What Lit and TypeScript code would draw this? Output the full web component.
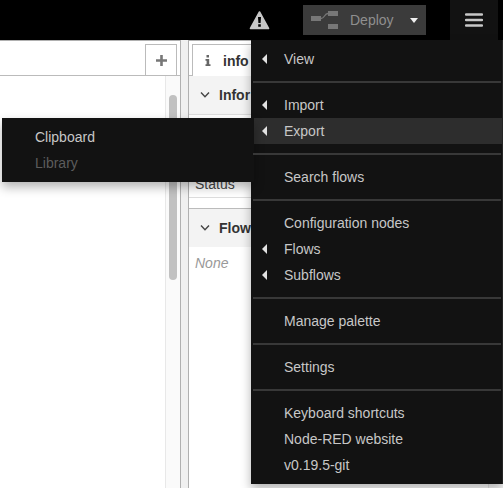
import { LitElement, html, svg, css, nothing } from "lit";
import { customElement, property } from "lit/decorators.js";

interface Entry {
  label: string;
  disabled?: boolean;
  active?: boolean;
  more?: boolean;
  items?: Entry[];
}

const MENU: Entry[][] = [
  [{ label: "View", more: true }],
  [
    { label: "Import", more: true },
    {
      label: "Export",
      more: true,
      active: true,
      items: [{ label: "Clipboard" }, { label: "Library", disabled: true }],
    },
  ],
  [{ label: "Search flows" }],
  [
    { label: "Configuration nodes" },
    { label: "Flows", more: true },
    { label: "Subflows", more: true },
  ],
  [{ label: "Manage palette" }],
  [{ label: "Settings" }],
  [
    { label: "Keyboard shortcuts" },
    { label: "Node-RED website" },
    { label: "v0.19.5-git" },
  ],
];

const chevron = svg`<svg class="chevron" width="10" height="8" viewBox="0 0 10 8" aria-hidden="true">
  <path d="M1 1.5 5 5.7 9 1.5" fill="none" stroke="#444" stroke-width="1.4" />
</svg>`;

@customElement("nr-menu")
export class NrMenu extends LitElement {
  @property({ attribute: false }) groups: Entry[][] = [];

  static styles = css`
    :host {
      display: block;
    }
    ul {
      list-style: none;
      margin: 0;
      padding: 6px 0;
      width: 252px;
      box-sizing: border-box;
      border-right: 1px solid #242424;
      background: #121212;
      box-shadow: 0 5px 10px rgba(0, 0, 0, 0.3);
    }
    li {
      position: relative;
    }
    .item {
      display: flex;
      align-items: center;
      height: 26px;
      margin-left: 3px;
      padding-left: 30px;
      color: #c7c7c7;
      font-size: 14px;
      line-height: 26px;
      text-decoration: none;
      white-space: nowrap;
    }
    .item.more {
      padding-left: 8px;
      gap: 17px;
    }
    .item.active {
      background: #2d2d2d;
    }
    .item.disabled {
      color: #5c5c5c;
    }
    .divider {
      height: 2px;
      margin: 9px 1px 9px 2px;
      background: #383838;
    }
    .submenu {
      position: absolute;
      top: 0;
      right: calc(100% - 3px);
      border-right: 0;
    }
  `;

  private entry(e: Entry): unknown {
    return html`<li role="none">
      <a
        class="item ${e.more ? "more" : ""} ${e.active ? "active" : ""} ${e.disabled ? "disabled" : ""}"
        role="menuitem"
        href="#"
        aria-disabled=${e.disabled ? "true" : "false"}
        >${e.more
          ? html`<svg width="5" height="10" viewBox="0 0 5 10" aria-hidden="true">
              <path d="M5 0V10L0 5Z" fill="#e2e2e2" />
            </svg>`
          : nothing}<span>${e.label}</span></a
      >
      ${e.items
        ? html`<ul class="submenu" role="menu">
            ${e.items.map((i) => this.entry(i))}
          </ul>`
        : nothing}
    </li>`;
  }

  render() {
    return html`<ul role="menu">
      ${this.groups.map(
        (g, i) => html`${i ? html`<li class="divider" role="separator"></li>` : nothing}
        ${g.map((e) => this.entry(e))}`
      )}
    </ul>`;
  }
}

@customElement("app-root")
export class AppRoot extends LitElement {
  static styles = css`
    :host {
      display: flex;
      flex-direction: column;
      position: relative;
      height: 100vh;
      overflow: hidden;
      background: #fff;
      color: #333;
      font: 14px/20px "Liberation Sans", Arial, sans-serif;
    }
    button {
      font: inherit;
      border: 0;
      padding: 0;
      margin: 0;
    }
    header {
      display: flex;
      align-items: center;
      justify-content: flex-end;
      flex: none;
      height: 40px;
      padding-right: 5px;
      background: #000;
    }
    .warn {
      display: flex;
      background: none;
      margin-right: 33px;
    }
    .deploy {
      display: flex;
      height: 30px;
      margin-right: 24px;
      background: #3b3b3b;
    }
    .deploy-main {
      display: flex;
      align-items: center;
      gap: 12px;
      padding-left: 8px;
      width: 99px;
      background: none;
      color: #8f8f8f;
    }
    .deploy-caret {
      display: flex;
      align-items: center;
      justify-content: center;
      width: 24px;
      background: none;
    }
    .burger {
      display: flex;
      align-items: center;
      justify-content: center;
      width: 48px;
      height: 40px;
      background: #121212;
    }
    main {
      flex: 1;
      min-height: 0;
      display: flex;
      background: #f0f0f0;
    }
    .workspace {
      flex: 1;
      min-width: 0;
      display: flex;
      flex-direction: column;
      border: solid #b0b0b0;
      border-width: 1px 1px 0 0;
      background: #fff;
    }
    .tabs {
      display: flex;
      flex: none;
      height: 35px;
      box-sizing: border-box;
      padding-top: 3px;
      border-bottom: 1px solid #bbb;
      background: #fff;
    }
    .workspace .tabs {
      justify-content: flex-end;
      padding-right: 3px;
    }
    .add {
      display: flex;
      align-items: center;
      justify-content: center;
      width: 32px;
      box-sizing: border-box;
      border: solid #bbb;
      border-width: 1px 1px 0;
      background: #fff;
    }
    .canvas {
      flex: 1;
      display: flex;
      justify-content: flex-end;
    }
    .track {
      flex: none;
      width: 15px;
      box-sizing: border-box;
      padding: 19px 3px 0;
      border-left: 1px solid #e8e8e8;
      background: #fafafa;
    }
    .thumb {
      width: 8px;
      height: 185px;
      border-radius: 4px;
      background: #c1c1c1;
    }
    .sidebar {
      display: flex;
      flex-direction: column;
      width: 315px;
      box-sizing: border-box;
      margin-left: 7px;
      border: solid #b0b0b0;
      border-width: 1px 0 0 1px;
      background: #fff;
    }
    .sidebar .tabs {
      padding-left: 3px;
    }
    .body {
      flex: 1;
      display: flex;
    }
    .info {
      flex: 1;
    }
    .tab {
      display: flex;
      align-items: center;
      gap: 12px;
      width: 120px;
      height: 32px;
      box-sizing: border-box;
      padding-left: 12px;
      border: solid #bbb;
      border-width: 1px 1px 0;
      background: #fff;
      color: #333;
      font-weight: bold;
    }
    h2 {
      display: flex;
      align-items: center;
      gap: 9px;
      height: 38px;
      margin: 0;
      padding-left: 11px;
      background: #f3f3f3;
      font-size: 14px;
    }
    h2.ruled {
      border-top: 1px solid #bbb;
    }
    .props {
      margin-bottom: 10px;
      padding-top: 56px;
      border: solid #ddd;
      border-width: 1px 0;
    }
    .row {
      height: 26px;
      padding-left: 6px;
      line-height: 26px;
      color: #444;
    }
    .none {
      margin: 0;
      padding: 6px;
      color: #999;
      font-style: italic;
    }
    .menu {
      position: absolute;
      top: 40px;
      right: 0;
    }
  `;

  render() {
    return html`
      <header>
        <button class="warn" aria-label="Warnings">
          <svg width="21" height="19" viewBox="0 0 21 19">
            <path
              d="M10.5 1 19.5 17.5H1.5Z"
              fill="#c7c7c7"
              stroke="#c7c7c7"
              stroke-width="1.6"
              stroke-linejoin="round"
            />
            <path d="M9 6H12L11.6 12H9.4ZM9.2 13.2H11.8V15.8H9.2Z" fill="#000" />
          </svg>
        </button>
        <div class="deploy">
          <button class="deploy-main">
            <svg width="27" height="18" viewBox="0 0 27 18" aria-hidden="true">
              <path d="M0 5H10V10H0ZM17 0H27V5H17ZM17 13H27V18H17Z" fill="#777" />
              <path d="M10 7.5C14 7.5 13 2.5 17 2.5" fill="none" stroke="#777" stroke-width="1.3" />
            </svg>
            <span>Deploy</span>
          </button>
          <button class="deploy-caret" aria-label="Deploy options">
            <svg width="8" height="5" viewBox="0 0 8 5">
              <path d="M0 0H8L4 5Z" fill="#eee" />
            </svg>
          </button>
        </div>
        <button class="burger" aria-label="Menu">
          <svg width="18" height="14" viewBox="0 0 18 14">
            <path
              d="M1 1.5H17M1 7H17M1 12.5H17"
              stroke="#c7c7c7"
              stroke-width="2.4"
              stroke-linecap="round"
            />
          </svg>
        </button>
      </header>
      <main>
        <section class="workspace" aria-label="Workspace">
          <div class="tabs">
            <button class="add" aria-label="Add flow">
              <svg width="11" height="11" viewBox="0 0 11 11">
                <path d="M5.5 0V11M0 5.5H11" stroke="#777" stroke-width="2.6" />
              </svg>
            </button>
          </div>
          <div class="canvas"><div class="track"><div class="thumb"></div></div></div>
        </section>
        <aside class="sidebar">
          <div class="tabs">
            <button class="tab">
              <svg width="6" height="11" viewBox="0 0 6 11" aria-hidden="true">
                <path d="M1.5 0H4V2.4H1.5ZM0.5 4H4.2V9.3H5.5V11H0.5V9.3H1.6V5.7H0.5Z" fill="#666" />
              </svg>
              <span>info</span>
            </button>
          </div>
          <div class="body">
            <div class="info">
              <h2>${chevron}<span>Infor</span></h2>
              <div class="props"><div class="row">Status</div></div>
              <h2 class="ruled">${chevron}<span>Flow</span></h2>
              <p class="none">None</p>
            </div>
            <div class="track"></div>
          </div>
        </aside>
      </main>
      <nr-menu class="menu" .groups=${MENU}></nr-menu>
    `;
  }
}
